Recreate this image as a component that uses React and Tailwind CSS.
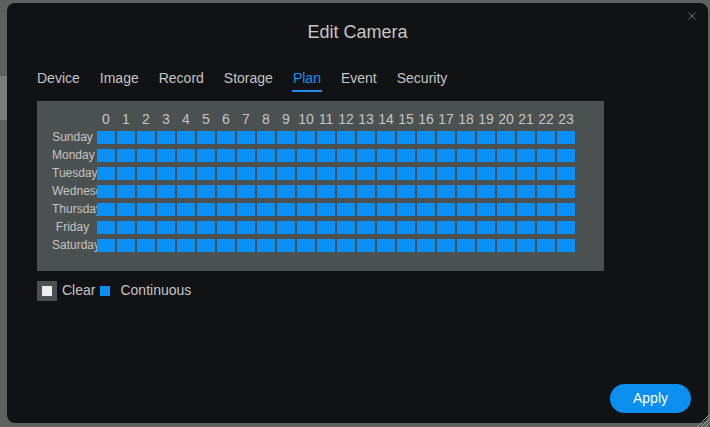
import React from "react";

const tabs = ["Device", "Image", "Record", "Storage", "Plan", "Event", "Security"];
const days = ["Sunday", "Monday", "Tuesday", "Wednesday", "Thursday", "Friday", "Saturday"];
const hours = Array.from({ length: 24 }, (_, i) => i);

const App = () => {
  return (
    <div
      className="flex w-[710px] h-[427px] bg-[#5f6060] overflow-hidden"
      style={{ fontFamily: '"Liberation Sans", Arial, sans-serif' }}
    >
      {/* page behind the dialog */}
      <div className="w-[7px] shrink-0 pt-[76px]">
        <div className="h-[44px] bg-[#7b7c7c]" />
      </div>

      {/* Dialog */}
      <div className="relative mt-[3px] w-[701px] h-[420px] shrink-0 rounded-[8px] bg-[#111214] flex flex-col">
        <button className="absolute top-[9px] right-[12px]" aria-label="Close">
          <svg width="8" height="8" viewBox="0 0 8 8">
            <path d="M0.5 0.5 L7.5 7.5 M7.5 0.5 L0.5 7.5" stroke="#6f7172" strokeWidth="1" />
          </svg>
        </button>

        <h1 className="pt-[17px] text-center text-[18px] leading-[24px] text-[#c6c7c7]">
          Edit Camera
        </h1>

        {/* Tabs */}
        <div className="mt-[24px] px-[29px] flex gap-[18px]">
          {tabs.map((t) => (
            <div
              key={t}
              className={
                t === "Plan"
                  ? "px-[1px] pb-[2px] border-b-2 border-[#1a8ff0] text-[14px] leading-[20px] text-[#1a8ff0]"
                  : "px-[1px] pb-[2px] border-b-2 border-transparent text-[14px] leading-[20px] text-[#c4c5c5]"
              }
            >
              {t}
            </div>
          ))}
        </div>

        {/* Schedule grid */}
        <div className="mt-[9px] ml-[30px] w-[567px] h-[170px] bg-[#4b5050] pl-[15px] pt-[10px]">
          <div className="flex">
            <div className="w-[45px]" />
            <div className="flex gap-[2px]">
              {hours.map((h) => (
                <div key={h} className="w-[18px] text-center text-[14px] leading-[16px] text-[#c4c5c5] whitespace-nowrap flex justify-center">
                  {h}
                </div>
              ))}
            </div>
          </div>
          <div className="mt-[4px] flex flex-col gap-[5px]">
            {days.map((d) => (
              <div key={d} className="flex h-[13px]">
                <div className="w-[45px] overflow-hidden">
                  <div className="w-[41px] text-center text-[12px] leading-[13px] text-[#c4c5c5] whitespace-nowrap">
                    {d}
                  </div>
                </div>
                <div className="flex gap-[2px]">
                  {hours.map((h) => (
                    <div key={h} className="w-[18px] h-[13px] bg-[#0a8ff4]" />
                  ))}
                </div>
              </div>
            ))}
          </div>
        </div>

        {/* Legend */}
        <div className="mt-[10px] ml-[30px] flex items-center text-[14px] leading-[16px] text-[#c4c5c5]">
          <div className="w-[20px] h-[20px] bg-[#4b5050] flex items-center justify-center">
            <div className="w-[10px] h-[10px] bg-[#eeeeee]" />
          </div>
          <span className="ml-[5px] -mt-[3px]">Clear</span>
          <div className="ml-[5px] w-[10px] h-[10px] bg-[#0a8ff4]" />
          <span className="ml-[10px] -mt-[3px]">Continuous</span>
        </div>

        {/* Footer */}
        <div className="mt-auto flex justify-end pr-[17px] pb-[10px]">
          <button className="w-[81px] h-[29px] rounded-full bg-[#0a8ff0] text-white text-[14px]">
            Apply
          </button>
        </div>

        {/* resize grip */}
        <svg className="absolute right-[-2px] bottom-[-4px]" width="16" height="16" viewBox="0 0 16 16">
          <line x1="3" y1="16" x2="16" y2="3" stroke="#9a9a9a" strokeWidth="1" />
          <line x1="7" y1="16" x2="16" y2="7" stroke="#9a9a9a" strokeWidth="1" />
          <line x1="11" y1="16" x2="16" y2="11" stroke="#9a9a9a" strokeWidth="1" />
        </svg>
      </div>
    </div>
  );
};

export default App;
